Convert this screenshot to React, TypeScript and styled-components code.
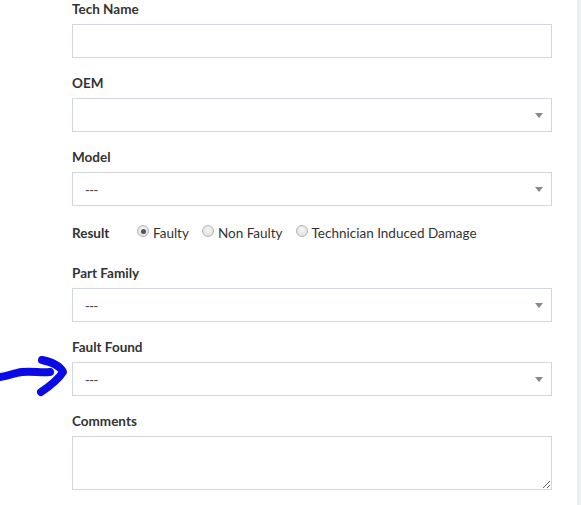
import React from "react";
import styled, { createGlobalStyle } from "styled-components";

const Global = createGlobalStyle`
  html, body { margin: 0; padding: 0; background: #fff; }
  body { font-family: "Lato", "Liberation Sans", sans-serif; color: #333; }
`;

const Page = styled.div`
  position: relative;
  display: flex;
  width: 581px;
  height: 505px;
  overflow: hidden;
`;

const Main = styled.div`
  width: 577px;
  padding-left: 72px;
  box-sizing: border-box;
  background: #fff;
`;

const Strip = styled.div`
  flex: 1;
  background: #ecf0f5;
`;

const Form = styled.form`
  width: 480px;
  display: flex;
  flex-direction: column;
`;

const Group = styled.div`
  display: flex;
  flex-direction: column;
  margin-bottom: 16px;
`;

const Label = styled.label`
  font-size: 13.5px;
  font-weight: 700;
  line-height: 18px;
  height: 18px;
  margin-bottom: 6px;
  color: #333;
`;

const Input = styled.input`
  box-sizing: border-box;
  width: 100%;
  height: 34px;
  border: 1px solid #d2d6de;
  border-radius: 0;
  padding: 0 12px;
  font: inherit;
  font-size: 13px;
  outline: none;
`;

const SelectBox = styled.div`
  position: relative;
  box-sizing: border-box;
  height: 34px;
  border: 1px solid #d2d6de;
  padding: 0 12px;
  display: flex;
  align-items: center;
  font-size: 13px;
  color: #444;
`;

const Caret = styled.span`
  position: absolute;
  right: 8px;
  top: 50%;
  margin-top: -2px;
  width: 0;
  height: 0;
  border-left: 4px solid transparent;
  border-right: 4px solid transparent;
  border-top: 5px solid #888;
`;

const Dashes = styled.span`
  letter-spacing: -0.6px;
  margin-top: 1px;
`;

const ResultRow = styled.div`
  display: flex;
  align-items: center;
  height: 22px;
  margin-bottom: 20px;
`;

const ResultLabel = styled.span`
  font-size: 13.5px;
  font-weight: 700;
  width: 65px;
`;

const Option = styled.label`
  display: flex;
  align-items: center;
  font-size: 13.5px;
  color: #333;
  margin-right: 13px;
`;

const Radio = styled.span<{ $checked?: boolean }>`
  box-sizing: border-box;
  width: 12px;
  height: 12px;
  border-radius: 50%;
  border: 1px solid #b4b4b4;
  background: radial-gradient(circle at 50% 40%, #f4f4f4 0%, #dcdcdc 100%);
  margin-right: 4px;
  margin-top: -4px;
  display: flex;
  align-items: center;
  justify-content: center;
  &::after {
    content: "";
    display: ${(p) => (p.$checked ? "block" : "none")};
    width: 5px;
    height: 5px;
    border-radius: 50%;
    background: #555;
  }
`;

const TextArea = styled.textarea`
  box-sizing: border-box;
  width: 100%;
  height: 54px;
  border: 1px solid #d2d6de;
  border-radius: 0;
  padding: 6px 12px;
  font: inherit;
  outline: none;
  display: block;
`;

const Arrow = styled.svg`
  position: absolute;
  left: 0;
  top: 352px;
`;

const Select: React.FC<{ value?: string }> = ({ value }) => (
  <SelectBox>
    {value ? <Dashes>{value}</Dashes> : null}
    <Caret />
  </SelectBox>
);

export default function App() {
  return (
    <Page>
      <Global />
      <Main>
        <Form>
          <Group>
            <Label>Tech Name</Label>
            <Input type="text" />
          </Group>
          <Group>
            <Label>OEM</Label>
            <Select />
          </Group>
          <Group>
            <Label>Model</Label>
            <Select value="---" />
          </Group>
          <ResultRow>
            <ResultLabel>Result</ResultLabel>
            <Option>
              <Radio $checked />
              Faulty
            </Option>
            <Option>
              <Radio />
              Non Faulty
            </Option>
            <Option>
              <Radio />
              Technician Induced Damage
            </Option>
          </ResultRow>
          <Group>
            <Label>Part Family</Label>
            <Select value="---" />
          </Group>
          <Group>
            <Label>Fault Found</Label>
            <Select value="---" />
          </Group>
          <Group>
            <Label>Comments</Label>
            <TextArea />
          </Group>
        </Form>
      </Main>
      <Strip />
      <Arrow width="70" height="46" viewBox="0 0 70 46">
        <path
          d="M0 25 C 8 24, 14 21, 22 20 C 32 19, 42 21, 50 20"
          stroke="#0a0ae6"
          strokeWidth="8"
          fill="none"
          strokeLinecap="round"
        />
        <path
          d="M42 8 C 52 10, 60 14, 63 20 C 58 28, 50 34, 41 40"
          stroke="#0a0ae6"
          strokeWidth="8"
          fill="none"
          strokeLinecap="round"
          strokeLinejoin="round"
        />
      </Arrow>
    </Page>
  );
}
